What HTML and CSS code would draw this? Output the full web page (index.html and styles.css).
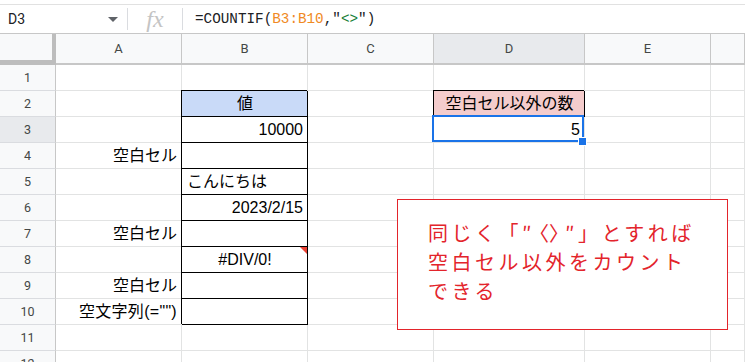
FILE: index.html
```html
<!DOCTYPE html>
<html lang="ja">
<head>
    <meta charset="UTF-8">
    <title>COUNTIF 空白セル以外</title>
    <link rel="stylesheet" href="styles.css">
</head>
<body>
    <div class="top">
        <div class="formula-bar">
            <div class="name-box">
                <span>D3</span>
                <span class="caret"></span>
            </div>
            <div class="sep"></div>
            <div class="fx">fx</div>
            <div class="sep"></div>
            <div class="formula">=COUNTIF(<span class="rng">B3:B10</span>,"<span class="str">&lt;&gt;</span>")</div>
        </div>
    </div>

    <div class="sheet">
        <!-- column headers -->
        <div class="corner"></div>
        <div class="col">A</div>
        <div class="col">B</div>
        <div class="col">C</div>
        <div class="col active">D</div>
        <div class="col">E</div>
        <div class="col"></div>

        <!-- row 1 -->
        <div class="row">1</div>
        <div class="cell"></div><div class="cell"></div><div class="cell"></div><div class="cell"></div><div class="cell"></div><div class="cell"></div>

        <!-- row 2 -->
        <div class="row">2</div>
        <div class="cell"></div>
        <div class="cell bx head center">値</div>
        <div class="cell"></div>
        <div class="cell bx pink center">空白セル以外の数</div>
        <div class="cell"></div><div class="cell"></div>

        <!-- row 3 -->
        <div class="row active">3</div>
        <div class="cell"></div>
        <div class="cell bx right">10000</div>
        <div class="cell"></div>
        <div class="cell right sel">5<span class="handle"></span></div>
        <div class="cell"></div><div class="cell"></div>

        <!-- row 4 -->
        <div class="row">4</div>
        <div class="cell right">空白セル</div>
        <div class="cell bx"></div>
        <div class="cell"></div><div class="cell"></div><div class="cell"></div><div class="cell"></div>

        <!-- row 5 -->
        <div class="row">5</div>
        <div class="cell"></div>
        <div class="cell bx">こんにちは</div>
        <div class="cell"></div><div class="cell"></div><div class="cell"></div><div class="cell"></div>

        <!-- row 6 -->
        <div class="row">6</div>
        <div class="cell"></div>
        <div class="cell bx right">2023/2/15</div>
        <div class="cell"></div><div class="cell"></div><div class="cell"></div><div class="cell"></div>

        <!-- row 7 -->
        <div class="row">7</div>
        <div class="cell right">空白セル</div>
        <div class="cell bx"></div>
        <div class="cell"></div><div class="cell"></div><div class="cell"></div><div class="cell"></div>

        <!-- row 8 -->
        <div class="row">8</div>
        <div class="cell"></div>
        <div class="cell bx center err">#DIV/0!</div>
        <div class="cell"></div><div class="cell"></div><div class="cell"></div><div class="cell"></div>

        <!-- row 9 -->
        <div class="row">9</div>
        <div class="cell right">空白セル</div>
        <div class="cell bx"></div>
        <div class="cell"></div><div class="cell"></div><div class="cell"></div><div class="cell"></div>

        <!-- row 10 -->
        <div class="row">10</div>
        <div class="cell right wide">空文字列(="")</div>
        <div class="cell bx"></div>
        <div class="cell"></div><div class="cell"></div><div class="cell"></div><div class="cell"></div>

        <!-- row 11 -->
        <div class="row">11</div>
        <div class="cell"></div><div class="cell"></div><div class="cell"></div><div class="cell"></div><div class="cell"></div><div class="cell"></div>

        <!-- row 12 -->
        <div class="row">12</div>
        <div class="cell"></div><div class="cell"></div><div class="cell"></div><div class="cell"></div><div class="cell"></div><div class="cell"></div>
    </div>

    <div class="note">
        同じく「″<span class="ang">〈〉</span>″」とすれば<br>
        空白セル以外をカウント<br>
        できる
    </div>
</body>
</html>
```

FILE: styles.css
```css
body {
    margin: 0;
    height: 362px;
    overflow: hidden;
    position: relative;
    background: #fff;
    font-family: 'Liberation Sans', 'Noto Sans CJK JP', sans-serif;
    color: #000;
}

.top {
    padding-top: 4px;
}

.formula-bar {
    height: 28px;
    border-top: 1px solid #e1e1e1;
    border-bottom: 1px solid #c7c7c7;
    display: flex;
    align-items: center;
}

.name-box {
    width: 127px;
    box-sizing: border-box;
    padding: 0 9px 0 8px;
    display: flex;
    align-items: center;
    justify-content: space-between;
    font-family: Roboto, 'Liberation Sans', sans-serif;
    font-size: 14px;
    color: #202124;
}

.caret {
    width: 0;
    height: 0;
    border-left: 5px solid transparent;
    border-right: 5px solid transparent;
    border-top: 5px solid #5f6368;
}

.sep {
    width: 1px;
    height: 22px;
    background: #dadce0;
}

.fx {
    width: 54px;
    text-align: center;
    font-family: 'Liberation Serif', serif;
    font-style: italic;
    font-size: 24px;
    color: #c4c4c4;
    line-height: 28px;
}

.formula {
    padding-left: 12px;
    font-family: 'Liberation Mono', monospace;
    font-size: 14.3px;
    color: #202124;
}

.rng { color: #f08a24; }
.str { color: #188038; }

.sheet {
    display: grid;
    grid-template-columns: 56px 126px 126px 126px 151px 126px 1fr;
    grid-template-rows: 31px;
    grid-auto-rows: 26px;
}

.corner {
    background: #f8f9fa;
    border-right: 4px solid #bdbdbd;
    border-bottom: 5px solid #bdbdbd;
    box-sizing: border-box;
}

.col {
    background: #f8f9fa;
    border-right: 1px solid #c7c7c7;
    border-bottom: 2px solid #c7c7c7;
    display: flex;
    align-items: center;
    justify-content: center;
    font-family: Roboto, 'Liberation Sans', sans-serif;
    font-size: 13px;
    color: #444746;
}

.row {
    background: #f8f9fa;
    border-right: 1px solid #c7c7c7;
    border-bottom: 1px solid #dadce0;
    display: flex;
    align-items: center;
    justify-content: center;
    font-family: Roboto, 'Liberation Sans', sans-serif;
    font-size: 12.5px;
    color: #444746;
}

.active {
    background: #e8eaed;
}

.cell {
    border-right: 1px solid #e2e3e3;
    border-bottom: 1px solid #e2e3e3;
    display: flex;
    align-items: flex-end;
    padding: 0 4px 2px 5px;
    font-size: 16px;
    line-height: 20px;
    white-space: nowrap;
    position: relative;
}

.right { justify-content: flex-end; }
.center { justify-content: center; }
.wide { letter-spacing: 0.3px; }

.bx {
    border-right-color: #000;
    border-bottom-color: #000;
    box-shadow: -1px -1px 0 0 #000;
}

.head { background: #c9daf8; }
.pink { background: #f4cccc; }

.err::after {
    content: '';
    position: absolute;
    top: 0;
    right: 0;
    border-top: 7px solid #ea4335;
    border-left: 7px solid transparent;
}

.sel::after {
    content: '';
    position: absolute;
    left: -2px;
    top: -2px;
    right: 0;
    bottom: 0;
    border: 2px solid #1a73e8;
}

.handle {
    position: absolute;
    right: -3px;
    bottom: -4px;
    width: 7px;
    height: 7px;
    background: #1a73e8;
    border: 1px solid #fff;
    z-index: 2;
}

.note {
    position: absolute;
    left: 397px;
    top: 199px;
    width: 331px;
    height: 131px;
    box-sizing: border-box;
    border: 1px solid #e3242b;
    background: #fff;
    padding: 18px 0 0 30px;
    font-family: 'Noto Sans CJK JP', sans-serif;
    font-size: 20px;
    line-height: 29px;
    letter-spacing: 3.5px;
    color: #e3242b;
}

.ang {
    letter-spacing: 0;
    margin: 0 -4px 0 -6px;
}
```
